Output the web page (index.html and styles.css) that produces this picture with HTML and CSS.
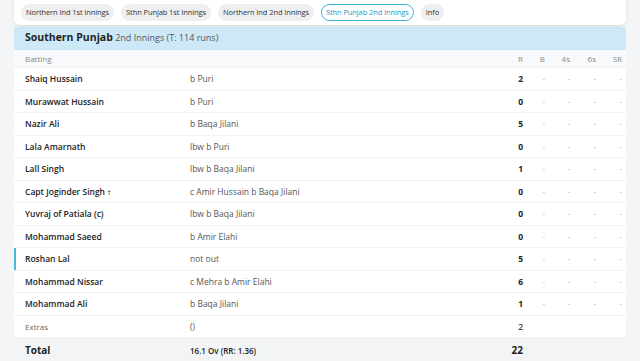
FILE: index.html
```html
<!DOCTYPE html>
<html>
<head>
<meta charset="utf-8">
<link rel="stylesheet" href="styles.css">
</head>
<body>
<div class="wrap">
  <nav class="tabs">
    <span class="tab">Northern Ind 1st Innings</span>
    <span class="tab">Sthn Punjab 1st Innings</span>
    <span class="tab">Northern Ind 2nd Innings</span>
    <span class="tab active">Sthn Punjab 2nd Innings</span>
    <span class="tab">Info</span>
  </nav>
  <section class="card">
    <header class="inn-head"><strong>Southern Punjab</strong> 2nd Innings (T: 114 runs)</header>
    <div class="row head">
      <span class="name">Batting</span><span></span><span class="num">R</span><span class="num">B</span><span class="num">4s</span><span class="num">6s</span><span class="num">SR</span>
    </div>
    <div class="row"><span class="name">Shaiq Hussain</span><span class="dis">b Puri</span><span class="num r">2</span><span class="num d">-</span><span class="num d">-</span><span class="num d">-</span><span class="num d">-</span></div>
    <div class="row"><span class="name">Murawwat Hussain</span><span class="dis">b Puri</span><span class="num r">0</span><span class="num d">-</span><span class="num d">-</span><span class="num d">-</span><span class="num d">-</span></div>
    <div class="row"><span class="name">Nazir Ali</span><span class="dis">b Baqa Jilani</span><span class="num r">5</span><span class="num d">-</span><span class="num d">-</span><span class="num d">-</span><span class="num d">-</span></div>
    <div class="row"><span class="name">Lala Amarnath</span><span class="dis">lbw b Puri</span><span class="num r">0</span><span class="num d">-</span><span class="num d">-</span><span class="num d">-</span><span class="num d">-</span></div>
    <div class="row"><span class="name">Lall Singh</span><span class="dis">lbw b Baqa Jilani</span><span class="num r">1</span><span class="num d">-</span><span class="num d">-</span><span class="num d">-</span><span class="num d">-</span></div>
    <div class="row"><span class="name">Capt Joginder Singh <span class="dag">†</span></span><span class="dis">c Amir Hussain b Baqa Jilani</span><span class="num r">0</span><span class="num d">-</span><span class="num d">-</span><span class="num d">-</span><span class="num d">-</span></div>
    <div class="row"><span class="name">Yuvraj of Patiala (c)</span><span class="dis">lbw b Baqa Jilani</span><span class="num r">0</span><span class="num d">-</span><span class="num d">-</span><span class="num d">-</span><span class="num d">-</span></div>
    <div class="row"><span class="name">Mohammad Saeed</span><span class="dis">b Amir Elahi</span><span class="num r">0</span><span class="num d">-</span><span class="num d">-</span><span class="num d">-</span><span class="num d">-</span></div>
    <div class="row notout"><span class="name">Roshan Lal</span><span class="dis">not out</span><span class="num r">5</span><span class="num d">-</span><span class="num d">-</span><span class="num d">-</span><span class="num d">-</span></div>
    <div class="row"><span class="name">Mohammad Nissar</span><span class="dis">c Mehra b Amir Elahi</span><span class="num r">6</span><span class="num d">-</span><span class="num d">-</span><span class="num d">-</span><span class="num d">-</span></div>
    <div class="row"><span class="name">Mohammad Ali</span><span class="dis">b Baqa Jilani</span><span class="num r">1</span><span class="num d">-</span><span class="num d">-</span><span class="num d">-</span><span class="num d">-</span></div>
    <div class="row extras"><span class="name">Extras</span><span class="dis">()</span><span class="num r">2</span><span></span><span></span><span></span><span></span></div>
    <div class="row total"><span class="name">Total</span><span class="dis">16.1 Ov (RR: 1.36)</span><span class="num r">22</span><span></span><span></span><span></span><span></span></div>
  </section>
</div>
</body>
</html>
```

FILE: styles.css
```css
html, body {
  margin: 0;
  padding: 0;
}
body {
  background: #f4f5f7;
  font-family: "Open Sans", "Noto Sans", sans-serif;
  color: #222;
}
.wrap {
  padding: 0 14px;
}
.tabs {
  display: flex;
  align-items: center;
  gap: 7px;
  height: 25px;
  padding: 0 7px;
  background: #fff;
  border-radius: 0 0 5px 5px;
  box-shadow: 0 1px 3px rgba(0,0,0,0.12);
  position: relative;
  z-index: 1;
}
.tab {
  font-size: 7.5px;
  color: #333;
  background: #eeeff1;
  border: 1px solid #eeeff1;
  border-radius: 999px;
  padding: 0 4px;
  height: 15px;
  line-height: 15px;
  white-space: nowrap;
  letter-spacing: -0.1px;
}
.tab.active {
  background: #fff;
  border-color: #38b3d6;
  color: #1d9cc4;
}
.card {
  margin-top: 2px;
  background: #fff;
}
.inn-head {
  background: #cde9f8;
  height: 23px;
  line-height: 20px;
  padding-left: 11px;
  font-size: 9px;
  color: #555;
}
.inn-head strong {
  font-size: 10.5px;
  color: #222;
  font-weight: 700;
}
.row {
  display: grid;
  grid-template-columns: 176px 1fr 30px 22px 25px 26px 26px;
  padding-right: 4px;
  height: 22.5px;
  align-items: center;
  border-top: 1px solid #f1f2f4;
  box-sizing: border-box;
  font-size: 8.5px;
}
.row .name {
  padding-left: 11px;
  font-weight: 600;
  color: #222;
}
.dag {
  font-size: 7px;
  font-weight: 400;
}
.row .dis {
  color: #555;
}
.num {
  text-align: right;
}
.num.r {
  font-weight: 700;
  color: #222;
}
.num.d {
  color: #aaa;
  font-size: 7px;
}
.row.head {
  height: 17px;
  background: #f8f9fa;
  border-top: none;
  color: #888;
  font-size: 8px;
}
.row.head .name {
  font-weight: 400;
  color: #888;
}
.row.notout {
  box-shadow: inset 2px 0 0 #4bb8d4;
}
.row.extras .name {
  font-weight: 400;
  color: #666;
  font-size: 8px;
}
.row.extras .num.r {
  font-weight: 600;
  color: #444;
}
.row.total {
  background: #f3f4f6;
  height: 25px;
}
.row.total .name {
  font-size: 10px;
  font-weight: 700;
}
.row.total .dis {
  color: #222;
  font-weight: 600;
  font-size: 8px;
}
.row.total .num.r {
  font-size: 10px;
}
```
